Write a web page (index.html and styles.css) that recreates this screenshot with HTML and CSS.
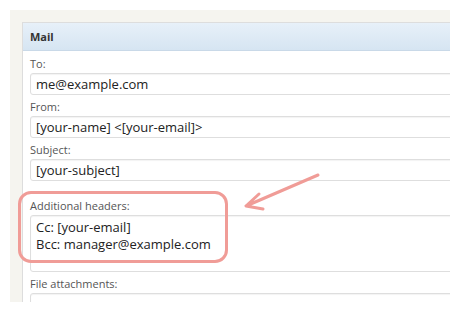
FILE: index.html
```html
<!DOCTYPE html>
<html lang="en">
<head>
    <meta charset="UTF-8">
    <title>Mail settings</title>
    <link rel="stylesheet" href="styles.css">
</head>
<body>
    <div class="frame">
        <div class="panel">
            <div class="panel-head">Mail</div>
            <div class="panel-body">
                <div class="field">
                    <label>To:</label>
                    <div class="input">me@example.com</div>
                </div>
                <div class="field">
                    <label>From:</label>
                    <div class="input">[your-name] &lt;[your-email]&gt;</div>
                </div>
                <div class="field">
                    <label>Subject:</label>
                    <div class="input">[your-subject]</div>
                </div>
                <div class="field field-gap">
                    <label>Additional headers:</label>
                    <div class="input textarea">Cc: [your-email]<br>Bcc: manager@example.com</div>
                </div>
                <div class="field">
                    <label>File attachments:</label>
                    <div class="input"></div>
                </div>
            </div>
        </div>
        <!-- callout over the headers field -->
        <div class="callout"></div>
        <svg class="arrow" width="100" height="50" viewBox="0 0 100 50">
            <path d="M92 7 L20 38 M33 26 L20 38 L37 41" fill="none" stroke="#f09c97" stroke-width="3" stroke-linecap="round" stroke-linejoin="round"/>
        </svg>
    </div>
</body>
</html>
```

FILE: styles.css
```css
body {
    margin: 0;
    background-color: #ffffff;
    font-family: "Open Sans", "DejaVu Sans", sans-serif;
}
.frame {
    position: relative;
    margin: 10px 10px 0 10px;
    height: 292px;
    padding: 12px 0 0 12px;
    box-sizing: border-box;
    background-color: #f5f4ef;
    overflow: hidden;
}
.panel {
    width: 480px;
    height: 400px;
    background-color: #ffffff;
    border: 1px solid #dddddd;
}
.panel-head {
    height: 27px;
    line-height: 27px;
    padding-left: 7px;
    font-size: 11px;
    font-weight: bold;
    color: #333333;
    background: linear-gradient(#e7f0f9, #d6e5f2);
    border-bottom: 1px solid #c9d9e8;
}
.panel-body {
    padding: 5px 7px 0 7px;
}
.field {
    margin-bottom: 4px;
}
.field-gap {
    margin-top: 17px;
}
.field label {
    display: block;
    font-size: 11px;
    color: #555555;
    height: 15px;
    line-height: 15px;
    margin-bottom: 2px;
}
.input {
    height: 22px;
    box-sizing: border-box;
    border: 1px solid #dedede;
    border-radius: 3px;
    padding: 0 5px;
    font-size: 13px;
    line-height: 20px;
    color: #222222;
    box-shadow: inset 0 1px 1px rgba(0, 0, 0, 0.05);
}
.textarea {
    height: 57px;
    line-height: 17px;
    padding-top: 3px;
}
.callout {
    position: absolute;
    left: 8px;
    top: 181px;
    width: 210px;
    height: 72px;
    box-sizing: border-box;
    border: 3px solid #f09c97;
    border-radius: 13px;
}
.arrow {
    position: absolute;
    left: 216px;
    top: 158px;
}
```
